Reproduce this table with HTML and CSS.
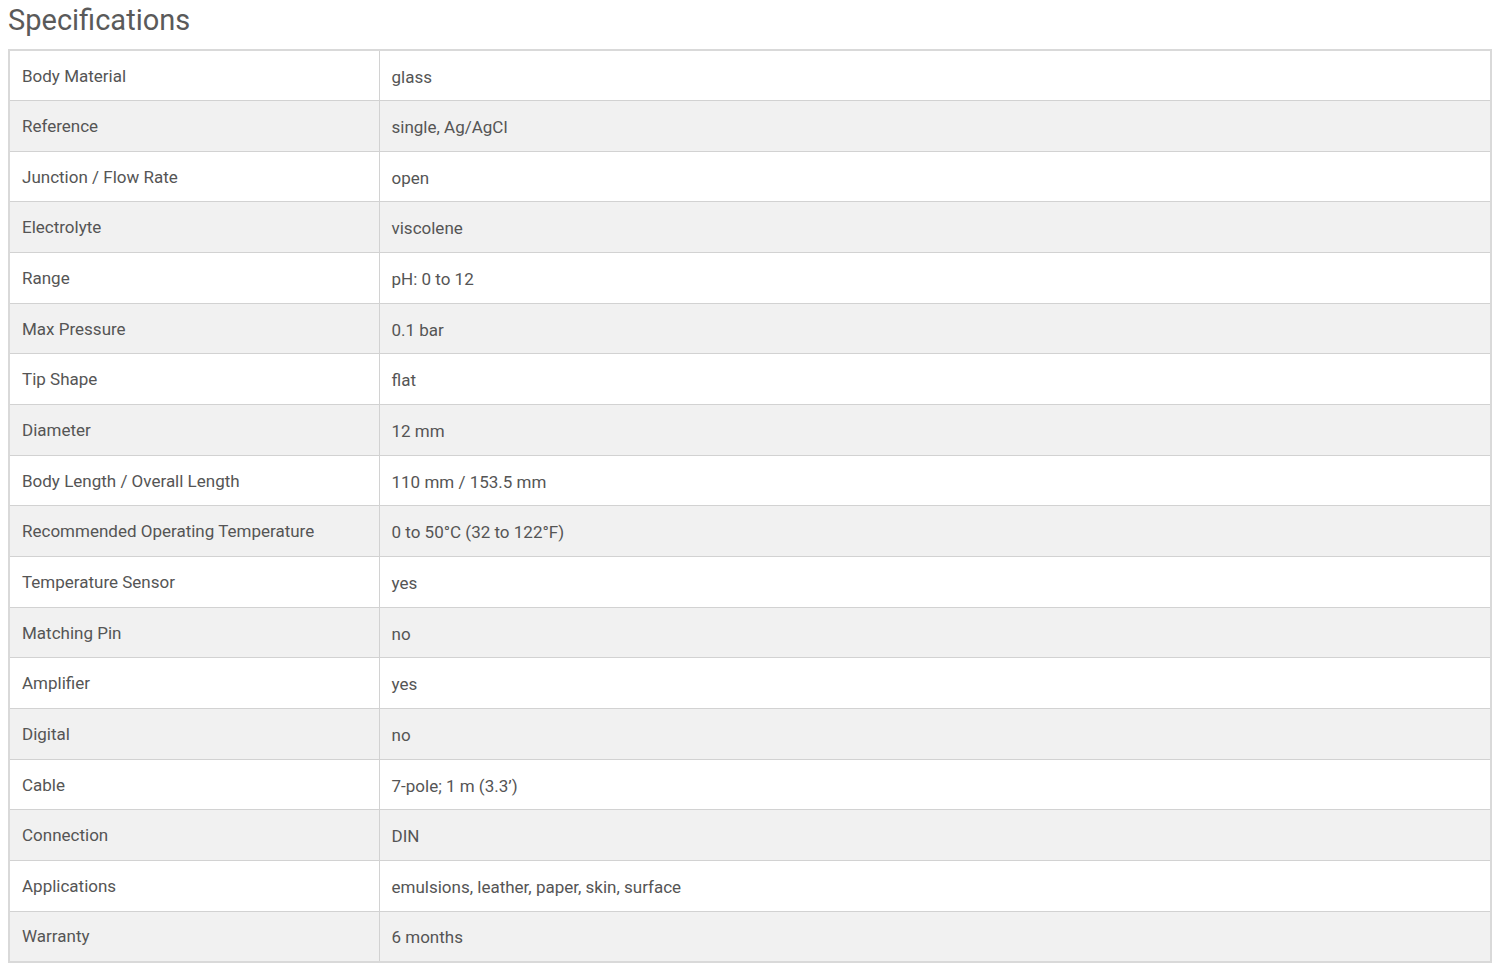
FILE: index.html
```html
<!DOCTYPE html>
<html>
<head>
<meta charset="utf-8">
<link rel="stylesheet" href="styles.css">
</head>
<body>
<h2 class="title">Specifications</h2>
<table class="specs">
<tbody>
<tr><td class="k">Body Material</td><td class="v">glass</td></tr>
<tr><td class="k">Reference</td><td class="v">single, Ag/AgCl</td></tr>
<tr><td class="k">Junction / Flow Rate</td><td class="v">open</td></tr>
<tr><td class="k">Electrolyte</td><td class="v">viscolene</td></tr>
<tr><td class="k">Range</td><td class="v">pH: 0 to 12</td></tr>
<tr><td class="k">Max Pressure</td><td class="v">0.1 bar</td></tr>
<tr><td class="k">Tip Shape</td><td class="v">flat</td></tr>
<tr><td class="k">Diameter</td><td class="v">12 mm</td></tr>
<tr><td class="k">Body Length / Overall Length</td><td class="v">110 mm / 153.5 mm</td></tr>
<tr><td class="k">Recommended Operating Temperature</td><td class="v">0 to 50°C (32 to 122°F)</td></tr>
<tr><td class="k">Temperature Sensor</td><td class="v">yes</td></tr>
<tr><td class="k">Matching Pin</td><td class="v">no</td></tr>
<tr><td class="k">Amplifier</td><td class="v">yes</td></tr>
<tr><td class="k">Digital</td><td class="v">no</td></tr>
<tr><td class="k">Cable</td><td class="v">7-pole; 1 m (3.3’)</td></tr>
<tr><td class="k">Connection</td><td class="v">DIN</td></tr>
<tr><td class="k">Applications</td><td class="v">emulsions, leather, paper, skin, surface</td></tr>
<tr><td class="k">Warranty</td><td class="v">6 months</td></tr>
</tbody>
</table>
</body>
</html>
```

FILE: styles.css
```css
html, body {
  margin: 0;
  padding: 0;
  background: #ffffff;
}
body {
  padding: 0 8px;
  font-family: Roboto, "Noto Sans", sans-serif;
  color: #555555;
}
.title {
  margin: 0;
  height: 49px;
  font-size: 29px;
  font-weight: 400;
  line-height: 40px;
  color: #5a5a5a;
}
.specs {
  width: 1484px;
  border-collapse: collapse;
  border: 2px solid #d9d9d9;
  font-size: 17px;
}
.specs tr:nth-child(even) td {
  background: #f1f1f1;
}
.specs td {
  height: 50.67px;
  padding: 0 12px;
  border-top: 1px solid #d2d2d2;
  border-bottom: 1px solid #d2d2d2;
  vertical-align: middle;
  box-sizing: border-box;
}
.specs td.k {
  width: 370px;
  border-right: 1px solid #d2d2d2;
}
.specs td.v {
  padding-top: 2px;
}
```
